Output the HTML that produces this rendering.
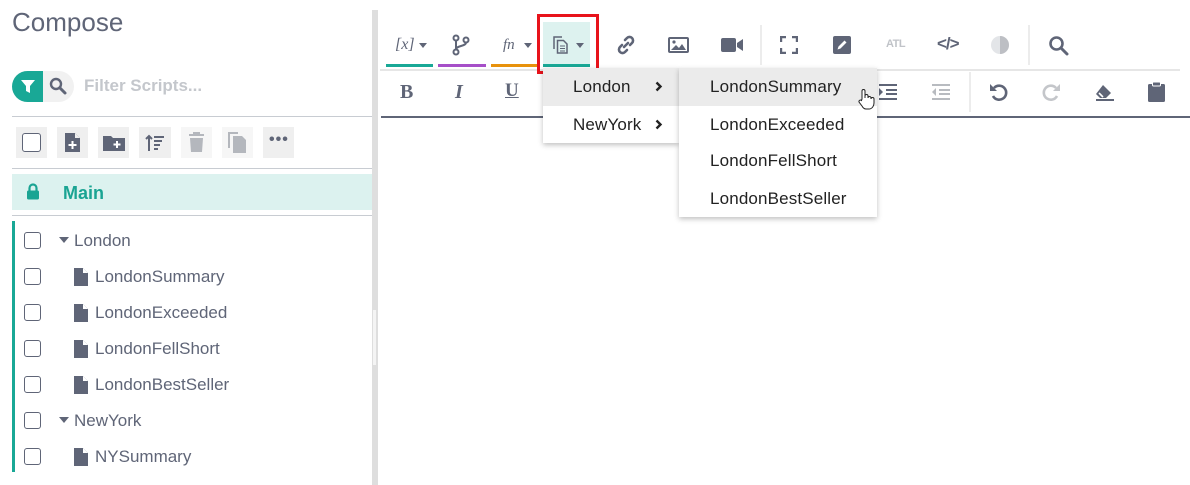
<!DOCTYPE html>
<html><head><meta charset="utf-8"><style>
*{margin:0;padding:0;box-sizing:border-box}
body{width:1190px;height:485px;background:#fff;font-family:"Liberation Sans",Arial,sans-serif;color:#5f6577;position:relative;overflow:hidden}
.a{position:absolute}
.t{font-size:17px;line-height:20px;white-space:nowrap}
.cb{position:absolute;width:17px;height:17px;border:1.5px solid #5f6577;border-radius:3px;background:#fff}
.hl{position:absolute;height:1px;background:#c8ccd2}
.btn{position:absolute;top:127px;width:31px;height:31px;background:#efefef}
.ic{position:absolute}
.mi{position:absolute;font-size:17px;color:#222;white-space:nowrap;letter-spacing:0.15px}
</style></head><body>
<div class="a" style="left:12px;top:7px;font-size:26px;color:#5f6577;font-weight:300">Compose</div>
<div class="a" style="left:12px;top:71px;width:62px;height:31px;border-radius:16px;background:#f1f1f1"></div>
<div class="a" style="left:12px;top:71px;width:31px;height:31px;border-radius:16px 0 0 16px;background:#19a896"></div>
<svg class="ic" style="left:19px;top:77px" width="18" height="18" viewBox="0 0 18 18"><path d="M2 3h14l-5 6v7l-4-2V9z" fill="#fff"/></svg>
<svg class="ic" style="left:48px;top:76px" width="20" height="20" viewBox="0 0 20 20"><circle cx="8" cy="8" r="5" fill="none" stroke="#5f6577" stroke-width="2.4"/><path d="M12 12l5 5" stroke="#5f6577" stroke-width="3" stroke-linecap="round"/></svg>
<div class="a t" style="left:84px;top:76px;font-weight:bold;color:#c4c7cc">Filter Scripts...</div>
<div class="hl" style="left:12px;top:116px;width:360px"></div>
<div class="btn" style="left:16px"></div><div class="cb" style="left:22px;top:133px;width:19px;height:19px"></div>
<div class="btn" style="left:57px"></div>
<svg class="ic" style="left:63px;top:132px" width="19" height="21" viewBox="0 0 19 21"><path d="M2 1h10l5 5v14H2z" fill="#5f6577"/><path d="M12 1v5h5" fill="#efefef"/><path d="M9.5 9v8M5.5 13h8" stroke="#fff" stroke-width="2"/></svg>
<div class="btn" style="left:98px"></div>
<svg class="ic" style="left:102px;top:134px" width="24" height="18" viewBox="0 0 24 18"><path d="M1 2h8l2 2h12v13H1z" fill="#5f6577"/><path d="M15 7v7M11.5 10.5h7" stroke="#fff" stroke-width="2"/></svg>
<div class="btn" style="left:139px;width:32px"></div>
<svg class="ic" style="left:144px;top:133px" width="22" height="20" viewBox="0 0 22 20"><path d="M5 18V3M2 6l3-3 3 3" fill="none" stroke="#5f6577" stroke-width="2"/><path d="M10 4h10M10 8h8M10 12h6M10 16h4" stroke="#5f6577" stroke-width="2"/></svg>
<div class="btn" style="left:181px;background:#f6f6f6"></div>
<svg class="ic" style="left:187px;top:132px" width="19" height="21" viewBox="0 0 19 21"><path d="M2 3h15M7 3V1h5v2" stroke="#b4b7bd" stroke-width="2" fill="none"/><path d="M3 6h13l-1 14H4z" fill="#b4b7bd"/></svg>
<div class="btn" style="left:222px;background:#f6f6f6"></div>
<svg class="ic" style="left:226px;top:131px" width="22" height="24" viewBox="0 0 22 24"><path d="M3 17V2h9" fill="none" stroke="#b4b7bd" stroke-width="2"/><path d="M7 5h9l4 4v13H7z" fill="#b4b7bd"/></svg>
<div class="btn" style="left:263px"></div>
<div class="a" style="left:269px;top:131px;font-size:16px;font-weight:bold;letter-spacing:1px;color:#5f6577">•••</div>
<div class="hl" style="left:12px;top:168px;width:360px"></div>
<div class="a" style="left:12px;top:174px;width:360px;height:36px;background:#dcf2ef"></div>
<svg class="ic" style="left:26px;top:183px" width="14" height="17" viewBox="0 0 14 17"><path d="M3.5 8V5a3.5 3.5 0 017 0v3" fill="none" stroke="#1aa493" stroke-width="2.2"/><rect x="1" y="7.5" width="12" height="9" rx="1.5" fill="#1aa493"/></svg>
<div class="a" style="left:63px;top:183px;font-size:18px;font-weight:bold;color:#1aa493">Main</div>
<div class="hl" style="left:12px;top:215px;width:360px"></div>
<div class="a" style="left:12px;top:221px;width:3px;height:251px;background:#19a896"></div>
<div class="cb" style="left:24px;top:232px"></div>
<div class="a" style="left:59px;top:237px;width:0;height:0;border-left:5px solid transparent;border-right:5px solid transparent;border-top:6px solid #5f6577"></div>
<div class="a t" style="left:74px;top:231px">London</div>
<div class="cb" style="left:24px;top:268px"></div><svg class="ic" style="left:74px;top:268px" width="15" height="18" viewBox="0 0 15 18"><path d="M0 0h9l5 5v13H0z" fill="#5f6577"/><path d="M9 0v5h5" fill="#fff"/></svg><div class="a t" style="left:95px;top:267px">LondonSummary</div>
<div class="cb" style="left:24px;top:304px"></div><svg class="ic" style="left:74px;top:304px" width="15" height="18" viewBox="0 0 15 18"><path d="M0 0h9l5 5v13H0z" fill="#5f6577"/><path d="M9 0v5h5" fill="#fff"/></svg><div class="a t" style="left:95px;top:303px">LondonExceeded</div>
<div class="cb" style="left:24px;top:340px"></div><svg class="ic" style="left:74px;top:340px" width="15" height="18" viewBox="0 0 15 18"><path d="M0 0h9l5 5v13H0z" fill="#5f6577"/><path d="M9 0v5h5" fill="#fff"/></svg><div class="a t" style="left:95px;top:339px">LondonFellShort</div>
<div class="cb" style="left:24px;top:376px"></div><svg class="ic" style="left:74px;top:376px" width="15" height="18" viewBox="0 0 15 18"><path d="M0 0h9l5 5v13H0z" fill="#5f6577"/><path d="M9 0v5h5" fill="#fff"/></svg><div class="a t" style="left:95px;top:375px">LondonBestSeller</div>
<div class="cb" style="left:24px;top:412px"></div>
<div class="a" style="left:59px;top:417px;width:0;height:0;border-left:5px solid transparent;border-right:5px solid transparent;border-top:6px solid #5f6577"></div>
<div class="a t" style="left:74px;top:411px">NewYork</div>
<div class="cb" style="left:24px;top:448px"></div><svg class="ic" style="left:74px;top:448px" width="15" height="18" viewBox="0 0 15 18"><path d="M0 0h9l5 5v13H0z" fill="#5f6577"/><path d="M9 0v5h5" fill="#fff"/></svg><div class="a t" style="left:95px;top:447px">NYSummary</div>
<div class="a" style="left:372px;top:10px;width:6px;height:475px;background:#dedede"></div>
<div class="a" style="left:373px;top:310px;width:3px;height:55px;background:#f4f4f4"></div>
<div class="hl" style="left:380px;top:69px;width:800px;background:#e6e6e6;height:2px"></div>
<div class="a" style="left:386px;top:64px;width:47px;height:3px;background:#19a896"></div>
<div class="a" style="left:438px;top:64px;width:48px;height:3px;background:#a64fc8"></div>
<div class="a" style="left:491px;top:64px;width:47px;height:3px;background:#e8920c"></div>
<div class="a" style="left:543px;top:22px;width:47px;height:42px;background:#ddf2ef"></div>
<div class="a" style="left:543px;top:64px;width:47px;height:3px;background:#19a896"></div>
<div class="a" style="left:537px;top:14px;width:62px;height:60px;border:3px solid #e8131b"></div>
<div class="a" style="left:395px;top:36px;font-family:'Liberation Serif',serif;font-style:italic;font-size:16px;color:#5f6577">[x]</div>
<div class="a" style="left:419px;top:43px;border-left:4px solid transparent;border-right:4px solid transparent;border-top:5px solid #5f6577"></div>
<svg class="ic" style="left:452px;top:34px" width="18" height="22" viewBox="0 0 18 22"><circle cx="4" cy="4" r="2.5" fill="none" stroke="#5f6577" stroke-width="2"/><circle cx="4" cy="18" r="2.5" fill="none" stroke="#5f6577" stroke-width="2"/><circle cx="14" cy="6" r="2.5" fill="none" stroke="#5f6577" stroke-width="2"/><path d="M4 6.5v9M14 8.5c0 4-10 3-10 7" fill="none" stroke="#5f6577" stroke-width="2"/></svg>
<div class="a" style="left:503px;top:37px;font-family:'Liberation Serif',serif;font-style:italic;font-size:15px;color:#5f6577">fn</div>
<div class="a" style="left:524px;top:43px;border-left:4px solid transparent;border-right:4px solid transparent;border-top:5px solid #5f6577"></div>
<svg class="ic" style="left:553px;top:36px" width="16" height="18" viewBox="0 0 16 18"><path d="M1 13V1h8" fill="none" stroke="#5f6577" stroke-width="1.5"/><path d="M4.5 4.5h6l3.5 3.5v9h-9.5z" fill="none" stroke="#5f6577" stroke-width="1.5"/><path d="M7 10h5M7 12.5h5M7 15h5" stroke="#5f6577" stroke-width="1"/></svg>
<div class="a" style="left:576px;top:43px;border-left:4px solid transparent;border-right:4px solid transparent;border-top:5px solid #5f6577"></div>
<svg class="ic" style="left:616px;top:35px" width="20" height="20" viewBox="0 0 20 20"><path d="M8 12l4-4M9 5l2-2a3.5 3.5 0 015 5l-2 2M11 15l-2 2a3.5 3.5 0 01-5-5l2-2" fill="none" stroke="#5f6577" stroke-width="2.6" stroke-linecap="round"/></svg>
<svg class="ic" style="left:668px;top:37px" width="21" height="16" viewBox="0 0 21 16"><rect x="1" y="1" width="19" height="14" rx="1" fill="none" stroke="#5f6577" stroke-width="2"/><path d="M3 13l5-5 3 3 3-4 4 6z" fill="#5f6577"/><circle cx="6" cy="5" r="1.6" fill="#5f6577"/></svg>
<svg class="ic" style="left:721px;top:37px" width="23" height="16" viewBox="0 0 23 16"><rect x="0" y="1" width="15" height="14" rx="2" fill="#5f6577"/><path d="M16 6l6-4v12l-6-4z" fill="#5f6577"/></svg>
<div class="a" style="left:760px;top:25px;width:2px;height:40px;background:#ececec"></div>
<svg class="ic" style="left:780px;top:36px" width="18" height="18" viewBox="0 0 18 18"><path d="M1 6V1h5M12 1h5v5M17 12v5h-5M6 17H1v-5" fill="none" stroke="#5f6577" stroke-width="2.4"/></svg>
<svg class="ic" style="left:833px;top:36px" width="18" height="18" viewBox="0 0 18 18"><rect width="18" height="18" rx="2" fill="#5f6577"/><path d="M4.5 13.5l1-3 6-6 2 2-6 6z" fill="#fff"/></svg>
<div class="a" style="left:886px;top:38px;font-size:11px;font-weight:bold;color:#c0c3c8;letter-spacing:-0.5px">ATL</div>
<div class="a" style="left:937px;top:34px;font-size:17px;font-weight:bold;color:#5f6577;letter-spacing:-1px">&lt;/&gt;</div>
<svg class="ic" style="left:990px;top:35px" width="20" height="20" viewBox="0 0 20 20"><circle cx="10" cy="10" r="9" fill="#e3e5e8"/><path d="M10 1a9 9 0 010 18z" fill="#bdbfc4"/></svg>
<div class="a" style="left:1028px;top:25px;width:2px;height:40px;background:#ececec"></div>
<svg class="ic" style="left:1048px;top:35px" width="21" height="21" viewBox="0 0 21 21"><circle cx="8.5" cy="8.5" r="6" fill="none" stroke="#5f6577" stroke-width="2.6"/><path d="M13 13l6 6" stroke="#5f6577" stroke-width="3" stroke-linecap="round"/></svg>
<div class="a" style="left:400px;top:81px;font-family:'Liberation Serif',serif;font-weight:bold;font-size:20px;color:#5f6577">B</div>
<div class="a" style="left:455px;top:81px;font-family:'Liberation Serif',serif;font-style:italic;font-weight:bold;font-size:20px;color:#5f6577">I</div>
<div class="a" style="left:505px;top:80px;font-family:'Liberation Serif',serif;font-weight:bold;font-size:19px;color:#5f6577;text-decoration:underline">U</div>
<svg class="ic" style="left:879px;top:84px" width="18" height="16" viewBox="0 0 18 16"><path d="M0 1h18M7 6h11M7 10h11M0 15h18" stroke="#5f6577" stroke-width="2"/><path d="M0 4l4 4-4 4z" fill="#5f6577"/></svg>
<svg class="ic" style="left:932px;top:84px" width="18" height="16" viewBox="0 0 18 16"><path d="M0 1h18M7 6h11M7 10h11M0 15h18" stroke="#b8bbc0" stroke-width="2"/><path d="M4 4L0 8l4 4z" fill="#b8bbc0"/></svg>
<div class="a" style="left:969px;top:72px;width:2px;height:40px;background:#ececec"></div>
<svg class="ic" style="left:989px;top:82px" width="20" height="20" viewBox="0 0 20 20"><path d="M5 6a7 7 0 11-1 8" fill="none" stroke="#5f6577" stroke-width="2.6"/><path d="M1 2v7h7z" fill="#5f6577"/></svg>
<svg class="ic" style="left:1041px;top:82px" width="20" height="20" viewBox="0 0 20 20"><path d="M15 6a7 7 0 10 1 8" fill="none" stroke="#c4c6ca" stroke-width="2.6"/><path d="M19 2v7h-7z" fill="#c4c6ca"/></svg>
<svg class="ic" style="left:1094px;top:83px" width="21" height="18" viewBox="0 0 21 18"><path d="M9 2l8 8-5 5H6l-4-4z" fill="#5f6577"/><path d="M5 10l4 4" stroke="#fff" stroke-width="1.6"/><path d="M2 17h18" stroke="#5f6577" stroke-width="2"/></svg>
<svg class="ic" style="left:1148px;top:81px" width="17" height="21" viewBox="0 0 17 21"><rect x="0" y="3" width="17" height="18" rx="1.5" fill="#5f6577"/><rect x="4.5" y="1" width="8" height="4" rx="1" fill="#5f6577" stroke="#fff" stroke-width="1"/></svg>
<div class="a" style="left:381px;top:116px;width:809px;height:2px;background:#5f6577"></div>
<div class="a" style="left:543px;top:68px;width:136px;height:75px;background:#fff;box-shadow:0 2px 5px rgba(0,0,0,.25)"></div>
<div class="a" style="left:543px;top:68px;width:136px;height:38px;background:#ebebeb"></div>
<div class="mi" style="left:573px;top:77px">London</div>
<svg class="ic" style="left:655px;top:81px" width="8" height="11" viewBox="0 0 8 11"><path d="M1.5 1.5l4 4-4 4" fill="none" stroke="#222" stroke-width="2.4"/></svg>
<div class="mi" style="left:573px;top:115px">NewYork</div>
<svg class="ic" style="left:655px;top:119px" width="8" height="11" viewBox="0 0 8 11"><path d="M1.5 1.5l4 4-4 4" fill="none" stroke="#222" stroke-width="2.4"/></svg>
<div class="a" style="left:679px;top:68px;width:198px;height:149px;background:#fff;box-shadow:0 2px 5px rgba(0,0,0,.25)"></div>
<div class="a" style="left:679px;top:68px;width:198px;height:38px;background:#ebebeb"></div>
<div class="mi" style="left:710px;top:77px">LondonSummary</div>
<div class="mi" style="left:710px;top:115px">LondonExceeded</div>
<div class="mi" style="left:710px;top:151px">LondonFellShort</div>
<div class="mi" style="left:710px;top:189px">LondonBestSeller</div>
<svg class="ic" style="left:857px;top:88px" width="18" height="22" viewBox="0 0 18 22"><path d="M5 11V3a1.5 1.5 0 013 0v7V8a1.5 1.5 0 013 0v2a1.5 1.5 0 013 0v1a1.5 1.5 0 013 0v4c0 3-2 6-5 6H9c-2 0-3-1-4-3l-3-4a1.5 1.5 0 012.5-1.5z" fill="#fff" stroke="#222" stroke-width="1"/></svg>
</body></html>
